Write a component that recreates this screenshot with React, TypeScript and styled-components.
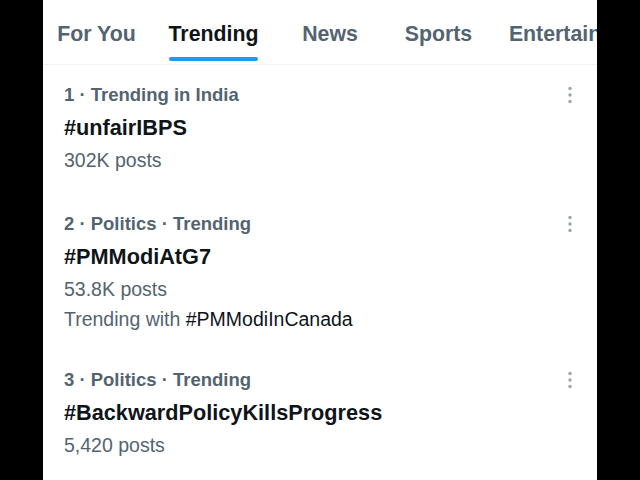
import React from "react";
import styled, { createGlobalStyle } from "styled-components";

const Global = createGlobalStyle`
  html, body { margin: 0; padding: 0; background: #000; }
  body { font-family: "Liberation Sans", Arial, sans-serif; -webkit-font-smoothing: antialiased; }
`;

const Stage = styled.div`
  display: flex;
  justify-content: center;
  min-height: 100vh;
  background: #000;
`;

const Panel = styled.div`
  width: 554px;
  min-height: 480px;
  background: #fff;
  overflow: hidden;
`;

const TabBar = styled.div`
  display: flex;
  height: 64px;
  border-bottom: 1px solid #eff3f4;
`;

const Tab = styled.div<{ $w: number }>`
  flex: 0 0 ${(p) => p.$w}px;
  display: flex;
  justify-content: center;
  padding-top: 19px;
  box-sizing: border-box;
`;

const TabLabel = styled.div<{ $active?: boolean }>`
  display: inline-flex;
  flex-direction: column;
  align-items: stretch;
  font-size: 21.3px;
  line-height: 30px;
  font-weight: 700;
  white-space: nowrap;
  color: ${(p) => (p.$active ? "#0f1419" : "#536471")};
`;

const Indicator = styled.div`
  margin-top: 8px;
  height: 4px;
  border-radius: 2px;
  background: #1d9bf0;
`;

const Item = styled.div`
  padding: 16px 17px 20px 21px;
  display: flex;
  flex-direction: column;
`;

const MetaRow = styled.div`
  display: flex;
  align-items: center;
  justify-content: space-between;
  height: 28px;
`;

const Meta = styled.span`
  font-size: 18.5px;
  line-height: 28px;
  font-weight: 700;
  color: #536471;
`;

const Hashtag = styled.div`
  font-size: 21.7px;
  line-height: 38px;
  font-weight: 700;
  color: #0f1419;
`;

const Posts = styled.div`
  font-size: 19.5px;
  line-height: 27px;
  color: #536471;
`;

const TrendingWith = styled(Posts)`
  margin-top: 3px;
  margin-bottom: -3px;
`;

const Strong = styled.span`
  color: #0f1419;
`;

const MoreButton = styled.svg`
  width: 20px;
  height: 20px;
  flex: 0 0 20px;
`;

const More = () => (
  <MoreButton viewBox="0 0 20 20">
    <circle cx="10" cy="3.5" r="1.7" fill="#9aa5ae" />
    <circle cx="10" cy="10" r="1.7" fill="#9aa5ae" />
    <circle cx="10" cy="16.5" r="1.7" fill="#9aa5ae" />
  </MoreButton>
);

const tabs = [
  { label: "For You", w: 107 },
  { label: "Trending", w: 127, active: true },
  { label: "News", w: 106 },
  { label: "Sports", w: 111 },
  { label: "Entertainment", w: 173 },
];

type Trend = { meta: string; tag: string; posts: string; with?: string };

const trends: Trend[] = [
  { meta: "1 · Trending in India", tag: "#unfairIBPS", posts: "302K posts" },
  {
    meta: "2 · Politics · Trending",
    tag: "#PMModiAtG7",
    posts: "53.8K posts",
    with: "#PMModiInCanada",
  },
  {
    meta: "3 · Politics · Trending",
    tag: "#BackwardPolicyKillsProgress",
    posts: "5,420 posts",
  },
];

export default function App() {
  return (
    <>
      <Global />
      <Stage>
        <Panel>
          <TabBar>
            {tabs.map((t) => (
              <Tab key={t.label} $w={t.w}>
                <TabLabel $active={t.active}>
                  {t.label}
                  {t.active && <Indicator />}
                </TabLabel>
              </Tab>
            ))}
          </TabBar>
          {trends.map((t) => (
            <Item key={t.tag}>
              <MetaRow>
                <Meta>{t.meta}</Meta>
                <More />
              </MetaRow>
              <Hashtag>{t.tag}</Hashtag>
              <Posts>{t.posts}</Posts>
              {t.with && (
                <TrendingWith>
                  Trending with <Strong>{t.with}</Strong>
                </TrendingWith>
              )}
            </Item>
          ))}
        </Panel>
      </Stage>
    </>
  );
}
